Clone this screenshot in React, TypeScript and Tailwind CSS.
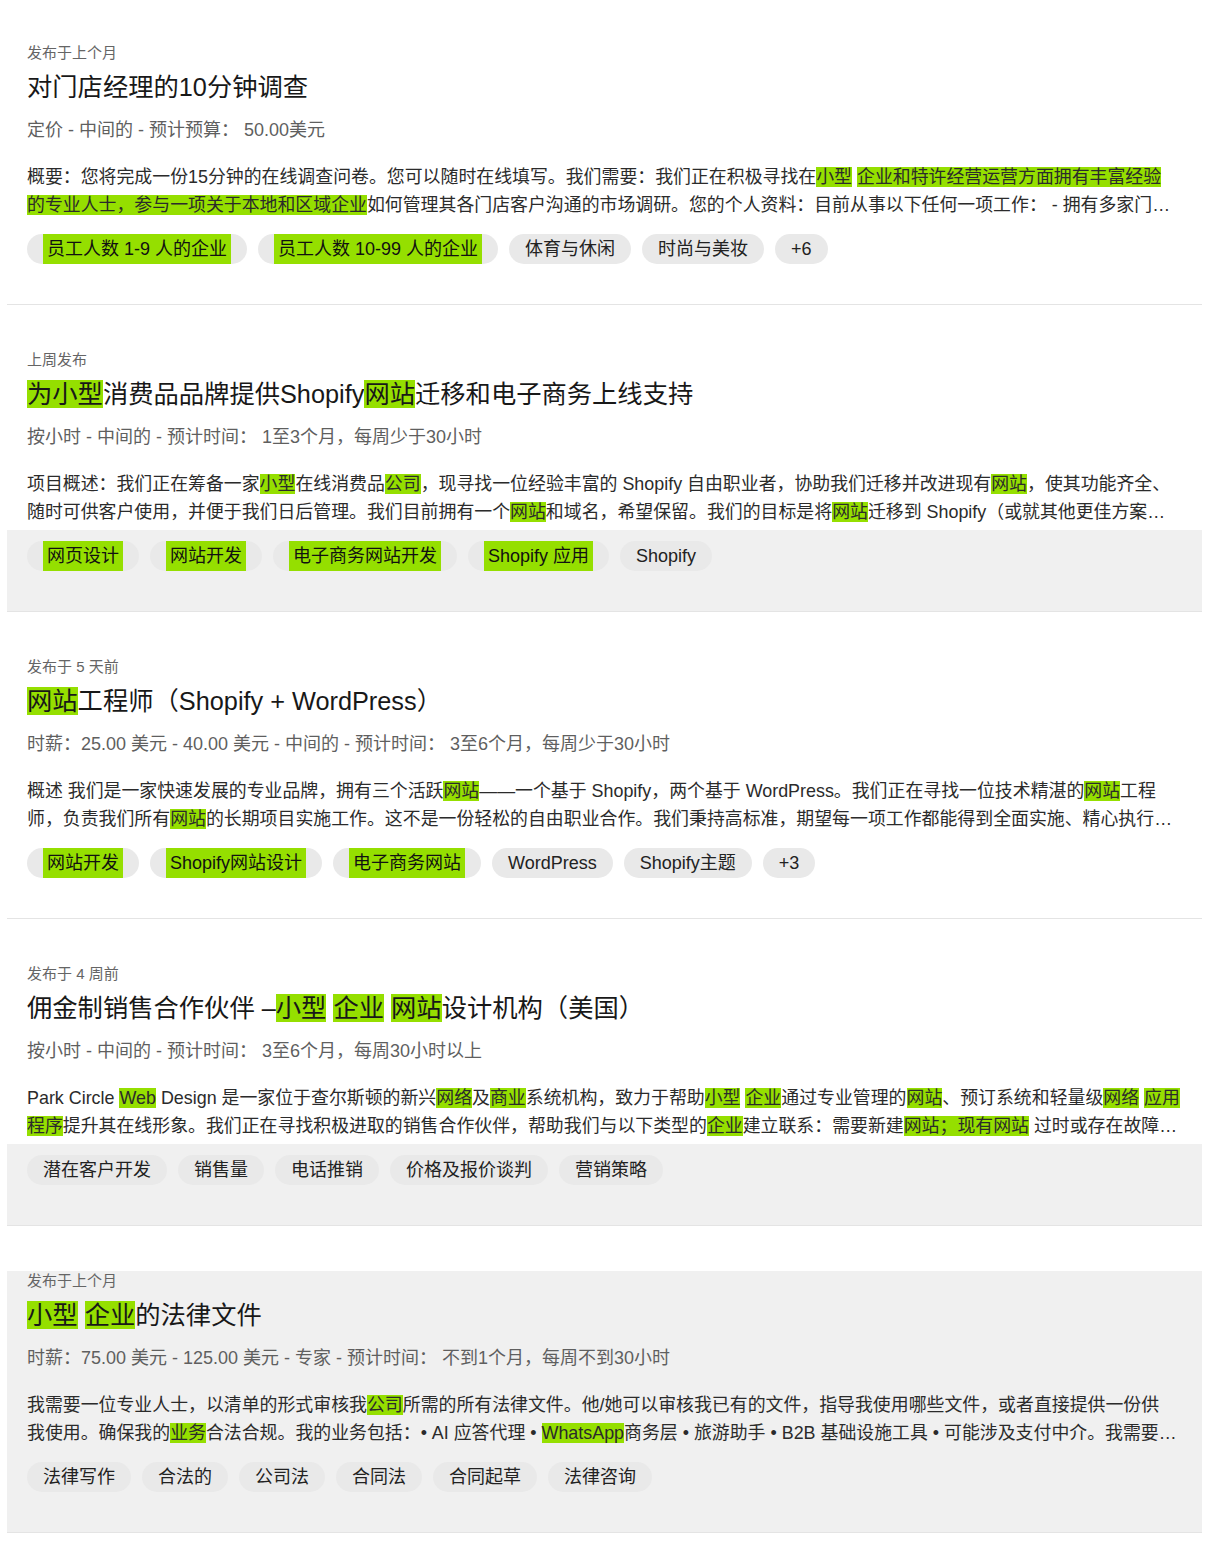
import React from "react";

type Shade = "none" | "tags" | "all";

type Job = {
  posted: string;
  title: string;
  meta: string;
  lines: [string, string];
  tags: { label: string; hit?: boolean }[];
  shade: Shade;
};

const jobs: Job[] = [
  {
    posted: "发布于上个月",
    title: "对门店经理的10分钟调查",
    meta: "定价 - 中间的 - 预计预算： 50.00美元",
    lines: [
      "概要：您将完成一份15分钟的在线调查问卷。您可以随时在线填写。我们需要：我们正在积极寻找在[小型] [企业和特许经营运营方面拥有丰富经验]",
      "[的专业人士，参与一项关于本地和区域企业]如何管理其各门店客户沟通的市场调研。您的个人资料：目前从事以下任何一项工作： - 拥有多家门…",
    ],
    tags: [
      { label: "员工人数 1-9 人的企业", hit: true },
      { label: "员工人数 10-99 人的企业", hit: true },
      { label: "体育与休闲" },
      { label: "时尚与美妆" },
      { label: "+6" },
    ],
    shade: "none",
  },
  {
    posted: "上周发布",
    title: "[为小型]消费品品牌提供Shopify[网站]迁移和电子商务上线支持",
    meta: "按小时 - 中间的 - 预计时间： 1至3个月，每周少于30小时",
    lines: [
      "项目概述：我们正在筹备一家[小型]在线消费品[公司]，现寻找一位经验丰富的 Shopify 自由职业者，协助我们迁移并改进现有[网站]，使其功能齐全、",
      "随时可供客户使用，并便于我们日后管理。我们目前拥有一个[网站]和域名，希望保留。我们的目标是将[网站]迁移到 Shopify（或就其他更佳方案…",
    ],
    tags: [
      { label: "网页设计", hit: true },
      { label: "网站开发", hit: true },
      { label: "电子商务网站开发", hit: true },
      { label: "Shopify 应用", hit: true },
      { label: "Shopify" },
    ],
    shade: "tags",
  },
  {
    posted: "发布于 5 天前",
    title: "[网站]工程师（Shopify + WordPress）",
    meta: "时薪：25.00 美元 - 40.00 美元 - 中间的 - 预计时间： 3至6个月，每周少于30小时",
    lines: [
      "概述 我们是一家快速发展的专业品牌，拥有三个活跃[网站]——一个基于 Shopify，两个基于 WordPress。我们正在寻找一位技术精湛的[网站]工程",
      "师，负责我们所有[网站]的长期项目实施工作。这不是一份轻松的自由职业合作。我们秉持高标准，期望每一项工作都能得到全面实施、精心执行…",
    ],
    tags: [
      { label: "网站开发", hit: true },
      { label: "Shopify网站设计", hit: true },
      { label: "电子商务网站", hit: true },
      { label: "WordPress" },
      { label: "Shopify主题" },
      { label: "+3" },
    ],
    shade: "none",
  },
  {
    posted: "发布于 4 周前",
    title: "佣金制销售合作伙伴 –[小型] [企业] [网站]设计机构（美国）",
    meta: "按小时 - 中间的 - 预计时间： 3至6个月，每周30小时以上",
    lines: [
      "Park Circle [Web] Design 是一家位于查尔斯顿的新兴[网络]及[商业]系统机构，致力于帮助[小型] [企业]通过专业管理的[网站]、预订系统和轻量级[网络] [应用]",
      "[程序]提升其在线形象。我们正在寻找积极进取的销售合作伙伴，帮助我们与以下类型的[企业]建立联系：需要新建[网站；现有网站] 过时或存在故障…",
    ],
    tags: [
      { label: "潜在客户开发" },
      { label: "销售量" },
      { label: "电话推销" },
      { label: "价格及报价谈判" },
      { label: "营销策略" },
    ],
    shade: "tags",
  },
  {
    posted: "发布于上个月",
    title: "[小型] [企业]的法律文件",
    meta: "时薪：75.00 美元 - 125.00 美元 - 专家 - 预计时间： 不到1个月，每周不到30小时",
    lines: [
      "我需要一位专业人士，以清单的形式审核我[公司]所需的所有法律文件。他/她可以审核我已有的文件，指导我使用哪些文件，或者直接提供一份供",
      "我使用。确保我的[业务]合法合规。我的业务包括：• AI 应答代理 • [WhatsApp]商务层 • 旅游助手 • B2B 基础设施工具 • 可能涉及支付中介。我需要…",
    ],
    tags: [
      { label: "法律写作" },
      { label: "合法的" },
      { label: "公司法" },
      { label: "合同法" },
      { label: "合同起草" },
      { label: "法律咨询" },
    ],
    shade: "all",
  },
];

// "[...]" marks a search hit
function Marked({ text }: { text: string }) {
  const parts = text.split(/(\[[^\]]*\])/).filter(Boolean);
  return (
    <>
      {parts.map((p, i) =>
        p.startsWith("[") ? (
          <span key={i} className="bg-[#95df00]">
            {p.slice(1, -1)}
          </span>
        ) : (
          <React.Fragment key={i}>{p}</React.Fragment>
        )
      )}
    </>
  );
}

function Tag({ label, hit }: { label: string; hit?: boolean }) {
  return (
    <span className="flex h-[30px] items-stretch rounded-full bg-[#e9e9e9] px-4 text-[18px] leading-[30px] text-[#222]">
      {hit ? <span className="bg-[#95df00] px-1 text-[#111]">{label}</span> : label}
    </span>
  );
}

function JobCard({ job }: { job: Job }) {
  return (
    <section className="border-b border-[#e4e4e4] pt-[52px] first:pt-[50px]">
      <div className={job.shade === "all" ? "bg-[#f0f0f0] px-5" : "px-5"}>
        <p className="-mt-[7px] text-[15px] leading-[20px] text-[#656565]">{job.posted}</p>
        <h2 className="mt-2 text-[25.3px] leading-[32px] text-[#181818]">
          <Marked text={job.title} />
        </h2>
        <p className="mt-[15px] text-[18px] leading-[24px] text-[#5f5f5f]">{job.meta}</p>
        <div className="mt-[21px] text-[17.9px] leading-[28px] text-[#2b2b2b]">
          {job.lines.map((l, i) => (
            <p key={i} className="whitespace-nowrap">
              <Marked text={l} />
            </p>
          ))}
        </div>
        <div
          className={
            job.shade === "tags"
              ? "-mx-5 mt-1 flex flex-wrap gap-[11px] bg-[#f0f0f0] px-5 pt-[11px] pb-10"
              : "mt-1 flex flex-wrap gap-[11px] pt-[11px] pb-10"
          }
        >
          {job.tags.map((t) => (
            <Tag key={t.label} label={t.label} hit={t.hit} />
          ))}
        </div>
      </div>
    </section>
  );
}

export default function App() {
  return (
    <div className="min-h-screen bg-white font-['Liberation_Sans','Noto_Sans_CJK_SC',sans-serif]">
      <div className="ml-[7px] w-[1195px]">
        {jobs.map((j, i) => (
          <JobCard key={i} job={j} />
        ))}
      </div>
    </div>
  );
}
